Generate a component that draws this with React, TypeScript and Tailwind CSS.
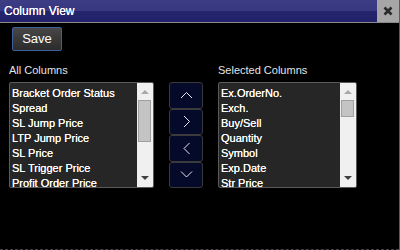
import React from "react";

const allColumns = [
  "Bracket Order Status",
  "Spread",
  "SL Jump Price",
  "LTP Jump Price",
  "SL Price",
  "SL Trigger Price",
  "Profit Order Price",
];

const selectedColumns = [
  "Ex.OrderNo.",
  "Exch.",
  "Buy/Sell",
  "Quantity",
  "Symbol",
  "Exp.Date",
  "Str Price",
];

function Chevron({ dir }: { dir: "up" | "down" | "left" | "right" }) {
  const d = {
    up: "M1 7 L6.5 1.5 L12 7",
    down: "M1 1.5 L6.5 7 L12 1.5",
    right: "M2 1 L7.5 6.5 L2 12",
    left: "M7.5 1 L2 6.5 L7.5 12",
  }[dir];
  const vertical = dir === "up" || dir === "down";
  return (
    <svg
      width={vertical ? 13 : 9}
      height={vertical ? 9 : 13}
      viewBox={vertical ? "0 0 13 9" : "0 0 9 13"}
      fill="none"
      stroke="#e8e8f0"
      strokeWidth="1"
    >
      <path d={d} />
    </svg>
  );
}

function ListBox({ items, width, thumb }: { items: string[]; width: string; thumb: string }) {
  return (
    <div className={`${width} h-[106px] flex border border-[#5a5a5a] rounded-[2px] bg-[#262626] overflow-hidden`}>
      <div className="flex-1 pl-[2px] pt-[3px] overflow-hidden">
        {items.map((item) => (
          <div key={item} className="h-[15px] leading-[15px] text-[11px] text-white whitespace-nowrap [text-shadow:0_0_0.4px_#fff]">
            {item}
          </div>
        ))}
      </div>
      <div className="w-[16px] bg-[#f0f0f0] flex flex-col items-center relative">
        <div className="mt-[7px] w-0 h-0 border-l-[4px] border-r-[4px] border-b-[4px] border-l-transparent border-r-transparent border-b-[#a8a8a8]" />
        <div className={`absolute top-[17px] left-[1px] w-[13px] ${thumb} bg-[#c4c4c4] border border-[#a0a0a0]`} />
        <div className="mt-auto mb-[7px] w-0 h-0 border-l-[4px] border-r-[4px] border-t-[4px] border-l-transparent border-r-transparent border-t-[#404040]" />
      </div>
    </div>
  );
}

export default function App() {
  return (
    <div
      className="w-[400px] h-[250px] bg-black overflow-hidden flex flex-col border-r border-r-[#5a5a5a]"
      style={{ fontFamily: "'Liberation Sans', Arial, sans-serif" }}
    >
      <div className="h-[23px] flex border-b border-[#8a8a8a] shrink-0">
        <div className="flex-1 bg-[linear-gradient(#3d3d86_0%,#383880_50%,#25256e_50%,#22226a_100%)] pl-[4px] text-[12px] leading-[22px] text-white [text-shadow:0_0_0.4px_#fff]">
          Column View
        </div>
        <div className="w-[22px] bg-[#a6a6a6] flex items-center justify-center">
          <svg width="10" height="10" viewBox="0 0 10 10" stroke="#2a2a2a" strokeWidth="2.6">
            <path d="M1.5 1.5 L8.5 8.5 M8.5 1.5 L1.5 8.5" />
          </svg>
        </div>
      </div>

      <div className="pl-[12px] pt-[3px]">
        <button className="w-[50px] h-[24px] rounded-[2px] border border-[#3d5f9e] bg-[linear-gradient(#474747,#2b2b2b)] text-white text-[13px] leading-[22px]">
          Save
        </button>
      </div>

      <div className="flex pl-[9px] mt-[13px] text-[11px] leading-[13px] text-[#e4e4e4]">
        <div className="w-[209px]">All Columns</div>
        <div>Selected Columns</div>
      </div>

      <div className="flex pl-[9px] mt-[5px] gap-[15px]">
        <ListBox items={allColumns} width="w-[145px]" thumb="h-[42px]" />
        <div className="w-[34px] h-[106px] flex flex-col">
          {(["up", "right", "left", "down"] as const).map((dir) => (
            <div
              key={dir}
              className="flex-1 flex items-center justify-center bg-[#050a2a] border border-[#3a3a3a] rounded-[3px]"
            >
              <Chevron dir={dir} />
            </div>
          ))}
        </div>
        <ListBox items={selectedColumns} width="w-[139px]" thumb="h-[17px]" />
      </div>

      <div className="mt-auto h-px border-b border-dashed border-[#444]" />
    </div>
  );
}
